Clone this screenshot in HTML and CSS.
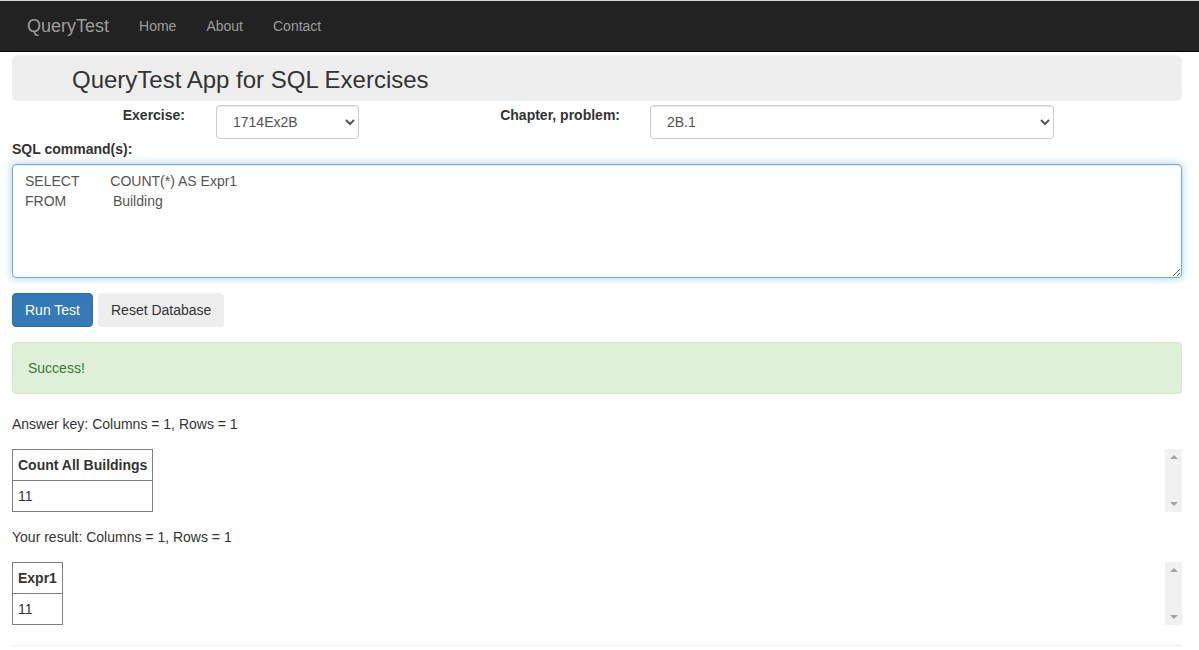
FILE: index.html
```html
<!DOCTYPE html>
<html lang="en">
<head>
<meta charset="utf-8">
<title>QueryTest</title>
<link rel="stylesheet" href="styles.css">
</head>
<body>
<nav class="navbar">
  <div class="nav-inner">
    <a class="brand" href="#">QueryTest</a>
    <a class="nav-link" href="#">Home</a>
    <a class="nav-link" href="#">About</a>
    <a class="nav-link" href="#">Contact</a>
  </div>
</nav>
<main class="container">
  <div class="jumbotron"><h1 class="title">QueryTest App for SQL Exercises</h1></div>
  <div class="select-row">
    <label class="sel-label lbl-ex">Exercise:</label>
    <select class="form-select sel-ex"><option>1714Ex2B</option></select>
    <label class="sel-label lbl-ch">Chapter, problem:</label>
    <select class="form-select sel-ch"><option>2B.1</option></select>
  </div>
  <label class="sql-label">SQL command(s):</label>
  <textarea class="sql-box" spellcheck="false">SELECT        COUNT(*) AS Expr1
FROM            Building</textarea>
  <div class="btn-row">
    <button class="btn btn-primary">Run Test</button>
    <button class="btn btn-gray">Reset Database</button>
  </div>
  <div class="alert">Success!</div>
  <p class="info">Answer key: Columns = 1, Rows = 1</p>
  <div class="table-wrap">
    <table class="result">
      <thead><tr><th>Count All Buildings</th></tr></thead>
      <tbody><tr><td>11</td></tr></tbody>
    </table>
    <div class="fake-scroll"><span class="arr up"></span><span class="arr down"></span></div>
  </div>
  <p class="info">Your result: Columns = 1, Rows = 1</p>
  <div class="table-wrap">
    <table class="result">
      <thead><tr><th>Expr1</th></tr></thead>
      <tbody><tr><td>11</td></tr></tbody>
    </table>
    <div class="fake-scroll"><span class="arr up"></span><span class="arr down"></span></div>
  </div>
  <hr class="rule">
</main>
</body>
</html>
```

FILE: styles.css
```css
* { box-sizing: border-box; }
html, body { margin: 0; padding: 0; }
body {
  font-family: "Liberation Sans", Arial, Helvetica, sans-serif;
  font-size: 14px;
  line-height: 20px;
  color: #333;
  background: #fff;
  overflow: hidden;
}
.navbar {
  background: #222;
  border-top: 1px solid #d6d6d6;
  border-bottom: 1px solid #080808;
  height: 52px;
}
.nav-inner {
  display: flex;
  align-items: center;
  height: 50px;
  padding-left: 12px;
}
.brand {
  color: #9d9d9d;
  font-size: 18px;
  line-height: 20px;
  padding: 15px;
  text-decoration: none;
}
.nav-link {
  color: #9d9d9d;
  font-size: 14px;
  padding: 15px;
  text-decoration: none;
}
.container {
  width: 1170px;
  margin-left: 12px;
}
.jumbotron {
  margin-top: 3px;
  background: #eee;
  border-radius: 6px;
  height: 46px;
  padding: 3px 60px 0;
  display: flex;
  align-items: center;
}
.title {
  margin: 0;
  font-size: 24px;
  font-weight: normal;
  line-height: 26px;
  color: #333;
}
.select-row {
  display: flex;
  align-items: flex-start;
  margin-top: 4px;
}
.sel-label {
  font-weight: bold;
  line-height: 20px;
  text-align: right;
  white-space: nowrap;
  flex-shrink: 0;
}
.form-select { flex-shrink: 0; }
.lbl-ex { width: 173px; }
.sel-ex { margin-left: 31px; width: 143px; }
.lbl-ch { margin-left: 131px; width: 130px; }
.sel-ch { margin-left: 30px; width: 404px; }
.form-select {
  height: 34px;
  padding: 6px 12px;
  font-family: inherit;
  font-size: 14px;
  color: #555;
  background: #fff;
  border: 1px solid #ccc;
  border-radius: 4px;
  box-shadow: inset 0 1px 1px rgba(0,0,0,.075);
}
.sql-label {
  display: block;
  font-weight: bold;
  margin-bottom: 5px;
}
.sql-box {
  display: block;
  width: 100%;
  height: 114px;
  padding: 6px 12px;
  font-family: inherit;
  font-size: 14px;
  line-height: 20px;
  color: #555;
  border: 1px solid #66afe9;
  border-radius: 4px;
  box-shadow: inset 0 1px 1px rgba(0,0,0,.075), 0 0 8px rgba(102,175,233,.6);
  outline: none;
  resize: vertical;
}
.btn-row {
  display: flex;
  gap: 5px;
  margin-top: 15px;
}
.btn {
  font-family: inherit;
  font-size: 14px;
  line-height: 20px;
  padding: 6px 12px;
  border-radius: 4px;
  height: 34px;
  border: 1px solid transparent;
}
.btn-primary {
  background: #337ab7;
  border-color: #2e6da4;
  color: #fff;
}
.btn-gray {
  background: #eee;
  border-color: #eee;
  color: #333;
}
.alert {
  margin-top: 15px;
  margin-bottom: 20px;
  padding: 15px;
  background: #dff0d8;
  border: 1px solid #d6e9c6;
  border-radius: 4px;
  color: #3c763d;
}
.info { margin: 0 0 15px; }
.table-wrap {
  display: flex;
  justify-content: space-between;
  margin-bottom: 15px;
}
.result {
  border-collapse: collapse;
}
.result th, .result td {
  border: 1px solid #808080;
  padding: 5px;
  text-align: left;
  line-height: 20px;
}
.result th { font-weight: bold; }
.fake-scroll {
  width: 17px;
  background: #f1f1f1;
  display: flex;
  flex-direction: column;
  justify-content: space-between;
  align-items: center;
  padding: 6px 0;
}
.arr {
  width: 0;
  height: 0;
  border-left: 4px solid transparent;
  border-right: 4px solid transparent;
}
.arr.up { border-bottom: 4px solid #a3a3a3; }
.arr.down { border-top: 4px solid #a3a3a3; }
.rule {
  margin: 20px 0 0;
  border: 0;
  border-top: 1px solid #eee;
}
```
